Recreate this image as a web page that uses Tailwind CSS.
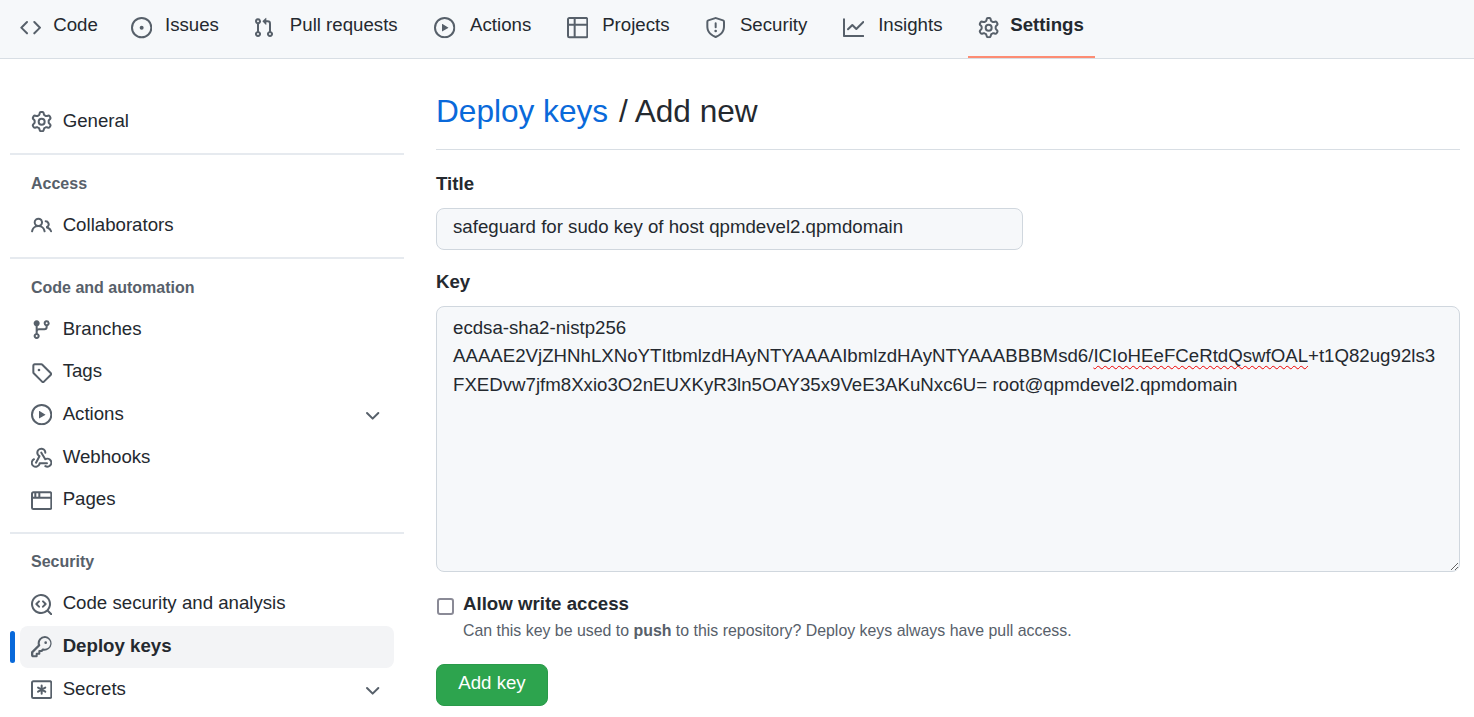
<!DOCTYPE html>
<html lang="en">
<head>
    <meta charset="UTF-8">
    <title>Add deploy key</title>
    <script src="https://cdn.jsdelivr.net/npm/@tailwindcss/browser@4"></script>
</head>
<body class="h-screen overflow-hidden bg-white font-['Liberation_Sans',Arial,sans-serif] text-[18.67px] text-[#24292f]">
    <svg class="hidden">
        <symbol id="play" viewBox="0 0 16 16"><path d="M1.5 8a6.5 6.5 0 1113 0 6.5 6.5 0 01-13 0zM8 0a8 8 0 100 16A8 8 0 008 0zM6.379 5.227A.25.25 0 006 5.442v5.117a.25.25 0 00.379.214l4.264-2.559a.25.25 0 000-.428L6.379 5.227z"/></symbol>
        <symbol id="gear" viewBox="0 0 16 16"><path d="M8 0a8.2 8.2 0 0 1 .701.031C9.444.095 9.99.645 10.16 1.29l.288 1.107c.018.066.079.158.212.224.231.114.454.243.668.386.123.082.233.09.299.071l1.103-.303c.644-.176 1.392.021 1.82.63.27.385.506.792.704 1.218.315.675.111 1.422-.364 1.891l-.814.806c-.049.048-.098.147-.088.294.016.257.016.515 0 .772-.01.147.038.246.088.294l.814.806c.475.469.679 1.216.364 1.891a7.977 7.977 0 0 1-.704 1.217c-.428.61-1.176.807-1.82.63l-1.102-.302c-.067-.019-.177-.011-.3.071a5.909 5.909 0 0 1-.668.386c-.133.066-.194.158-.211.224l-.29 1.106c-.168.646-.715 1.196-1.458 1.26a8.006 8.006 0 0 1-1.402 0c-.743-.064-1.289-.614-1.458-1.26l-.289-1.106c-.018-.066-.079-.158-.212-.224a5.738 5.738 0 0 1-.668-.386c-.123-.082-.233-.09-.299-.071l-1.103.303c-.644.176-1.392-.021-1.82-.63a8.12 8.12 0 0 1-.704-1.218c-.315-.675-.111-1.422.363-1.891l.815-.806c.05-.048.098-.147.088-.294a6.214 6.214 0 0 1 0-.772c.01-.147-.038-.246-.088-.294l-.815-.806C.635 6.045.431 5.298.746 4.623a7.92 7.92 0 0 1 .704-1.217c.428-.61 1.176-.807 1.82-.63l1.102.302c.067.019.177.011.3-.071.214-.143.437-.272.668-.386.133-.066.194-.158.211-.224l.29-1.106C6.009.645 6.556.095 7.299.03 7.53.01 7.764 0 8 0Zm-.571 1.525c-.036.003-.108.036-.137.146l-.289 1.105c-.147.561-.549.967-.998 1.189-.173.086-.34.183-.5.29-.417.278-.97.423-1.529.27l-1.103-.303c-.109-.03-.175.016-.195.045-.22.312-.412.644-.573.99-.014.031-.021.11.059.19l.815.806c.411.406.562.957.53 1.456a4.709 4.709 0 0 0 0 .582c.032.499-.119 1.05-.53 1.456l-.815.806c-.081.08-.073.159-.059.19.162.346.353.677.573.989.02.03.085.076.195.046l1.102-.303c.56-.153 1.113-.008 1.53.27.161.107.328.204.501.29.447.222.85.629.997 1.189l.289 1.105c.029.109.101.143.137.146a6.6 6.6 0 0 0 1.142 0c.036-.003.108-.036.137-.146l.289-1.105c.147-.561.549-.967.998-1.189.173-.086.34-.183.5-.29.417-.278.97-.423 1.529-.27l1.103.303c.109.029.175-.016.195-.045.22-.313.411-.644.573-.99.014-.031.021-.11-.059-.19l-.815-.806c-.411-.406-.562-.957-.53-1.456a4.709 4.709 0 0 0 0-.582c-.032-.499.119-1.05.53-1.456l.815-.806c.081-.08.073-.159.059-.19a6.464 6.464 0 0 0-.573-.989c-.02-.03-.085-.076-.195-.046l-1.102.303c-.56.153-1.113.008-1.53-.27a4.44 4.44 0 0 0-.501-.29c-.447-.222-.85-.629-.997-1.189l-.289-1.105c-.029-.11-.101-.143-.137-.146a6.6 6.6 0 0 0-1.142 0ZM11 8a3 3 0 1 1-6 0 3 3 0 0 1 6 0ZM9.5 8a1.5 1.5 0 1 0-3.001.001A1.5 1.5 0 0 0 9.5 8Z"/></symbol>
        <symbol id="chevron" viewBox="0 0 16 16"><path d="M12.78 6.22a.75.75 0 010 1.06l-4.25 4.25a.75.75 0 01-1.06 0L3.22 7.28a.75.75 0 011.06-1.06L8 9.94l3.72-3.72a.75.75 0 011.06 0z"/></symbol>
    </svg>

    <!-- repo tabs; the hidden bold copy reserves the width of the selected state -->
    <nav class="flex h-[59px] gap-[10.85px] border-b border-[#d8dee4] bg-[#f6f8fa] pl-[9.5px]">
        <a class="flex items-center gap-[10.67px] px-[10.67px] pb-[8px]">
            <svg class="mt-[6px] size-[21.33px] fill-[#57606a]" viewBox="0 0 16 16"><path d="M4.72 3.22a.75.75 0 011.06 1.06L2.06 8l3.72 3.72a.75.75 0 11-1.06 1.06L.47 8.53a.75.75 0 010-1.06l4.25-4.25zm6.56 0a.75.75 0 10-1.06 1.06L13.94 8l-3.72 3.72a.75.75 0 101.06 1.06l4.25-4.25a.75.75 0 000-1.06l-4.25-4.25z"/></svg>
            <span data-content="Code" class="text-center after:invisible after:block after:h-0 after:overflow-hidden after:font-bold after:content-[attr(data-content)]">Code</span>
        </a>
        <a class="flex items-center gap-[10.67px] px-[10.67px] pb-[8px]">
            <svg class="mt-[6px] size-[21.33px] fill-[#57606a]" viewBox="0 0 16 16"><path d="M8 9.5a1.5 1.5 0 100-3 1.5 1.5 0 000 3z"/><path d="M8 0a8 8 0 110 16A8 8 0 018 0zM1.5 8a6.5 6.5 0 1013 0 6.5 6.5 0 00-13 0z"/></svg>
            <span data-content="Issues" class="text-center after:invisible after:block after:h-0 after:overflow-hidden after:font-bold after:content-[attr(data-content)]">Issues</span>
        </a>
        <a class="flex items-center gap-[10.67px] px-[10.67px] pb-[8px]">
            <svg class="mt-[6px] size-[21.33px] fill-[#57606a]" viewBox="0 0 16 16"><path d="M7.177 3.073L9.573.677A.25.25 0 0110 .854v4.792a.25.25 0 01-.427.177L7.177 3.427a.25.25 0 010-.354zM3.75 2.5a.75.75 0 100 1.5.75.75 0 000-1.5zm-2.25.75a2.25 2.25 0 113 2.122v5.256a2.251 2.251 0 11-1.5 0V5.372A2.25 2.25 0 011.5 3.25zM11 2.5h-1V4h1a1 1 0 011 1v5.628a2.251 2.251 0 101.5 0V5A2.5 2.5 0 0011 2.5zm1 10.25a.75.75 0 111.5 0 .75.75 0 01-1.5 0zM3.75 12a.75.75 0 100 1.5.75.75 0 000-1.5z"/></svg>
            <span data-content="Pull requests" class="text-center after:invisible after:block after:h-0 after:overflow-hidden after:font-bold after:content-[attr(data-content)]">Pull requests</span>
        </a>
        <a class="flex items-center gap-[10.67px] px-[10.67px] pb-[8px]">
            <svg class="mt-[6px] size-[21.33px] fill-[#57606a]"><use href="#play"/></svg>
            <span data-content="Actions" class="text-center after:invisible after:block after:h-0 after:overflow-hidden after:font-bold after:content-[attr(data-content)]">Actions</span>
        </a>
        <a class="flex items-center gap-[10.67px] px-[10.67px] pb-[8px]">
            <svg class="mt-[6px] size-[21.33px] fill-[#57606a]" viewBox="0 0 16 16"><path fill-rule="evenodd" d="M0 1.75C0 .784.784 0 1.75 0h12.5C15.216 0 16 .784 16 1.75v12.5A1.75 1.75 0 0114.25 16H1.75A1.75 1.75 0 010 14.25V1.75zM1.5 6.5v7.75c0 .138.112.25.25.25H5v-8H1.5zM5 5H1.5V1.75a.25.25 0 01.25-.25H5V5zm1.5 1.5v8h7.75a.25.25 0 00.25-.25V6.5h-8zm8-1.5h-8V1.5h7.75a.25.25 0 01.25.25V5z"/></svg>
            <span data-content="Projects" class="text-center after:invisible after:block after:h-0 after:overflow-hidden after:font-bold after:content-[attr(data-content)]">Projects</span>
        </a>
        <a class="flex items-center gap-[10.67px] px-[10.67px] pb-[8px]">
            <svg class="mt-[6px] size-[21.33px] fill-[#57606a]" viewBox="0 0 16 16"><path d="M7.467.133a1.75 1.75 0 011.066 0l5.25 1.68A1.75 1.75 0 0115 3.48V7c0 1.566-.32 3.182-1.303 4.682-.983 1.498-2.585 2.813-5.032 3.855a1.7 1.7 0 01-1.33 0c-2.447-1.042-4.049-2.357-5.032-3.855C1.32 10.182 1 8.566 1 7V3.48a1.75 1.75 0 011.217-1.667l5.25-1.68zm.61 1.429a.25.25 0 00-.153 0l-5.25 1.68a.25.25 0 00-.174.238V7c0 1.358.275 2.666 1.057 3.86.784 1.194 2.121 2.34 4.366 3.297a.2.2 0 00.154 0c2.245-.956 3.582-2.104 4.366-3.298C13.225 9.666 13.5 8.36 13.5 7V3.48a.25.25 0 00-.174-.237l-5.25-1.68zM9 10.5a1 1 0 11-2 0 1 1 0 012 0zm-.25-5.75a.75.75 0 10-1.5 0v3a.75.75 0 001.5 0v-3z"/></svg>
            <span data-content="Security" class="text-center after:invisible after:block after:h-0 after:overflow-hidden after:font-bold after:content-[attr(data-content)]">Security</span>
        </a>
        <a class="flex items-center gap-[10.67px] px-[10.67px] pb-[8px]">
            <svg class="mt-[6px] size-[21.33px] fill-[#57606a]" viewBox="0 0 16 16"><path d="M1.5 1.75a.75.75 0 00-1.5 0v12.5c0 .414.336.75.75.75h14.5a.75.75 0 000-1.5H1.5V1.75zm14.28 2.53a.75.75 0 00-1.06-1.06L10 7.94 7.53 5.47a.75.75 0 00-1.06 0L3.22 8.72a.75.75 0 001.06 1.06L7 7.06l2.47 2.47a.75.75 0 001.06 0l5.25-5.25z"/></svg>
            <span data-content="Insights" class="text-center after:invisible after:block after:h-0 after:overflow-hidden after:font-bold after:content-[attr(data-content)]">Insights</span>
        </a>
        <a class="flex items-center gap-[10.67px] border-b-2 border-[#fd8c73] px-[10.67px] pb-[6px] font-bold">
            <svg class="mt-[6px] size-[21.33px] fill-[#57606a]"><use href="#gear"/></svg>
            Settings
        </a>
    </nav>

    <div class="flex gap-[32px] pl-[10px] pr-[14px]">
        <!-- settings menu -->
        <aside class="w-[394px] shrink-0 pt-[41.4px]">
            <a class="mx-[10px] flex h-[42.67px] items-center gap-[10.67px] pb-[2px] pl-[10.67px]">
                <svg class="mt-[2px] size-[21.33px] fill-[#57606a]"><use href="#gear"/></svg>
                General
            </a>
            <div class="mt-[10px] h-[2px] bg-[#e6eaef]"></div>
            <h3 class="px-[21px] pb-[10.67px] pt-[18.67px] text-[16px] leading-[20px] font-bold text-[#57606a]">Access</h3>
            <a class="mx-[10px] flex h-[42.67px] items-center gap-[10.67px] pb-[2px] pl-[10.67px]">
                <svg class="mt-[2px] size-[21.33px] fill-[#57606a]" viewBox="0 0 16 16"><path d="M2 5.5a3.5 3.5 0 115.898 2.549 5.507 5.507 0 013.034 4.084.75.75 0 11-1.482.235 4.001 4.001 0 00-7.9 0 .75.75 0 01-1.482-.236A5.507 5.507 0 013.102 8.05 3.49 3.49 0 012 5.5zM11 4a.75.75 0 100 1.5 1.5 1.5 0 01.666 2.844.75.75 0 00-.416.672v.352a.75.75 0 00.574.73c1.2.289 2.162 1.2 2.522 2.372a.75.75 0 101.434-.44 5.01 5.01 0 00-2.56-3.012A3 3 0 0011 4zM5.5 3.5a2 2 0 100 4 2 2 0 000-4z"/></svg>
                Collaborators
            </a>
            <div class="mt-[10px] h-[2px] bg-[#e6eaef]"></div>
            <h3 class="px-[21px] pb-[10.67px] pt-[18.67px] text-[16px] leading-[20px] font-bold text-[#57606a]">Code and automation</h3>
            <a class="mx-[10px] flex h-[42.67px] items-center gap-[10.67px] pb-[2px] pl-[10.67px]">
                <svg class="mt-[2px] size-[21.33px] fill-[#57606a]" viewBox="0 0 16 16"><path d="M11.75 2.5a.75.75 0 100 1.5.75.75 0 000-1.5zm-2.25.75a2.25 2.25 0 113 2.122V6A2.5 2.5 0 0110 8.5H6a1 1 0 00-1 1v1.128a2.251 2.251 0 11-1.5 0V5.372a2.25 2.25 0 111.5 0v1.836A2.492 2.492 0 016 7h4a1 1 0 001-1v-.628A2.25 2.25 0 019.5 3.25zM4.25 12a.75.75 0 100 1.5.75.75 0 000-1.5zM3.5 3.25a.75.75 0 111.5 0 .75.75 0 01-1.5 0z"/></svg>
                Branches
            </a>
            <a class="mx-[10px] flex h-[42.67px] items-center gap-[10.67px] pb-[2px] pl-[10.67px]">
                <svg class="mt-[2px] size-[21.33px] fill-[#57606a]" viewBox="0 0 16 16"><path fill-rule="evenodd" d="M2.5 7.775V2.75a.25.25 0 01.25-.25h5.025a.25.25 0 01.177.073l6.25 6.25a.25.25 0 010 .354l-5.025 5.025a.25.25 0 01-.354 0l-6.25-6.25a.25.25 0 01-.073-.177zm-1.5 0V2.75C1 1.784 1.784 1 2.75 1h5.025c.464 0 .91.184 1.238.513l6.25 6.25a1.75 1.75 0 010 2.474l-5.026 5.026a1.75 1.75 0 01-2.474 0l-6.25-6.25A1.75 1.75 0 011 7.775zM6 5a1 1 0 100 2 1 1 0 000-2z"/></svg>
                Tags
            </a>
            <a class="mx-[10px] flex h-[42.67px] items-center gap-[10.67px] pb-[2px] pl-[10.67px]">
                <svg class="mt-[2px] size-[21.33px] fill-[#57606a]"><use href="#play"/></svg>
                Actions
                <svg class="ml-auto mr-[11px] mt-[2px] size-[21.33px] fill-[#57606a]"><use href="#chevron"/></svg>
            </a>
            <a class="mx-[10px] flex h-[42.67px] items-center gap-[10.67px] pb-[2px] pl-[10.67px]">
                <svg class="mt-[2px] size-[21.33px] fill-[#57606a]" viewBox="0 0 16 16"><path d="M5.5 4.25a2.25 2.25 0 014.5 0 .75.75 0 001.5 0 3.75 3.75 0 10-6.14 2.889l-2.272 4.258a.75.75 0 001.324.706L7 7.25a.75.75 0 00-.309-1.015A2.25 2.25 0 015.5 4.25z"/><path d="M7.364 3.607a.75.75 0 011.03.257l2.608 4.349a3.75 3.75 0 11-.628 6.785.75.75 0 01.752-1.299 2.25 2.25 0 10-.033-3.88.75.75 0 01-1.03-.256L7.107 4.636a.75.75 0 01.257-1.03z"/><path d="M2.9 8.776A.75.75 0 012.625 9.8 2.25 2.25 0 105.75 12.25a.75.75 0 01.75-.75h5.5a.75.75 0 010 1.5H7.182a3.75 3.75 0 11-5.307-4.5.75.75 0 011.025.276z"/></svg>
                Webhooks
            </a>
            <a class="mx-[10px] flex h-[42.67px] items-center gap-[10.67px] pb-[2px] pl-[10.67px]">
                <svg class="mt-[2px] size-[21.33px] fill-[#57606a]" viewBox="0 0 16 16"><path fill-rule="evenodd" d="M0 2.75C0 1.784.784 1 1.75 1h12.5c.966 0 1.75.784 1.75 1.75v10.5A1.75 1.75 0 0114.25 15H1.75A1.75 1.75 0 010 13.25V2.75zM1.5 6.5v6.75c0 .138.112.25.25.25h12.5a.25.25 0 00.25-.25V6.5h-13zM7 5h7.5V2.75a.25.25 0 00-.25-.25H7V5zM5.5 2.5H4V5h1.5V2.5zM2.5 2.5h-.75a.25.25 0 00-.25.25V5h1V2.5z"/></svg>
                Pages
            </a>
            <div class="mt-[10px] h-[2px] bg-[#e6eaef]"></div>
            <h3 class="px-[21px] pb-[10.67px] pt-[18.67px] text-[16px] leading-[20px] font-bold text-[#57606a]">Security</h3>
            <a class="mx-[10px] flex h-[42.67px] items-center gap-[10.67px] pb-[2px] pl-[10.67px]">
                <svg class="mt-[2px] size-[21.33px] fill-[#57606a]" viewBox="0 0 16 16"><path d="M8.47 4.97a.75.75 0 000 1.06L9.94 7.5 8.47 8.97a.75.75 0 101.06 1.06l2-2a.75.75 0 000-1.06l-2-2a.75.75 0 00-1.06 0zM6.53 6.03a.75.75 0 00-1.06-1.06l-2 2a.75.75 0 000 1.06l2 2a.75.75 0 101.06-1.06L5.06 7.5l1.47-1.47z"/><path fill-rule="evenodd" d="M12.246 13.307a7.5 7.5 0 111.06-1.06l2.474 2.473a.75.75 0 11-1.06 1.06l-2.474-2.473zM1.5 7.5a6 6 0 1110.386 4.094.75.75 0 00-.292.293A6 6 0 011.5 7.5z"/></svg>
                Code security and analysis
            </a>
            <div class="relative">
                <span class="absolute left-0 top-[5px] h-[32px] w-[5px] rounded-full bg-[#0969da]"></span>
                <a class="mx-[10px] flex h-[42.67px] items-center gap-[10.67px] rounded-lg bg-[#f3f4f6] pb-[2px] pl-[10.67px] font-bold">
                    <svg class="mt-[2px] size-[21.33px] fill-[#57606a]" viewBox="0 0 16 16"><path fill-rule="evenodd" d="M6.5 5.5a4 4 0 112.731 3.795.75.75 0 00-.768.18L7.44 10.5H6.25a.75.75 0 00-.75.75v1.25H4.25a.75.75 0 00-.75.75v1.25h-1.5a.25.25 0 01-.25-.25v-1.69l5.024-5.024a.75.75 0 00.181-.768A3.995 3.995 0 016.5 5.5zm4-5.5a5.5 5.5 0 00-5.348 6.789L.22 11.72a.75.75 0 00-.22.53v2c0 .966.784 1.75 1.75 1.75h2.5a.75.75 0 00.75-.75V14h1.25a.75.75 0 00.75-.75V12h1a.75.75 0 00.53-.22l.772-.773A5.5 5.5 0 1010.5 0zM12 5a1 1 0 11-2 0 1 1 0 012 0z"/></svg>
                    Deploy keys
                </a>
            </div>
            <a class="mx-[10px] flex h-[42.67px] items-center gap-[10.67px] pb-[2px] pl-[10.67px]">
                <svg class="mt-[2px] size-[21.33px] fill-[#57606a]" viewBox="0 0 16 16"><path fill-rule="evenodd" d="M0 2.75C0 1.784.784 1 1.75 1h12.5c.966 0 1.75.784 1.75 1.75v10.5A1.75 1.75 0 0114.25 15H1.75A1.75 1.75 0 010 13.25V2.75zm1.75-.25a.25.25 0 00-.25.25v10.5c0 .138.112.25.25.25h12.5a.25.25 0 00.25-.25V2.75a.25.25 0 00-.25-.25H1.75z"/><path d="M8 4.9v6.2M5.3 6.45l5.4 3.1M10.7 6.45l-5.4 3.1" stroke="#57606a" stroke-width="1.5" stroke-linecap="round"/></svg>
                Secrets
                <svg class="ml-auto mr-[11px] mt-[2px] size-[21.33px] fill-[#57606a]"><use href="#chevron"/></svg>
            </a>
        </aside>

        <!-- add deploy key form -->
        <main class="min-w-0 flex-1 pt-[32px]">
            <h1 class="border-b border-[#d8dee4] pb-[17px] text-[31.6px] leading-[41px]"><a class="text-[#0969da]">Deploy keys</a> <span class="ml-[2px]">/ Add new</span></h1>
            <label class="mt-[21px] block font-bold leading-[26px]">Title</label>
            <input type="text" value="safeguard for sudo key of host qpmdevel2.qpmdomain" class="mt-[11px] block h-[42px] w-[587px] rounded-lg border border-[#d0d7de] bg-[#f6f8fa] px-[16px] pb-[5px] text-[18.67px] outline-none">
            <label class="mt-[19px] block font-bold leading-[26px]">Key</label>
            <div class="mt-[11px] h-[266px] resize overflow-hidden break-words rounded-lg border border-[#d0d7de] bg-[#f6f8fa] px-[16px] py-[7px] leading-[28.4px]">ecdsa-sha2-nistp256 AAAAE2VjZHNhLXNoYTItbmlzdHAyNTYAAAAIbmlzdHAyNTYAAABBBMsd6/<span class="underline decoration-[#f00000] decoration-wavy decoration-[1.2px] underline-offset-[3px] [text-decoration-skip-ink:none]">ICIoHEeFCeRtdQswfOAL</span>+t1Q82ug92ls3FXEDvw7jfm8Xxio3O2nEUXKyR3ln5OAY35x9VeE3AKuNxc6U= root@qpmdevel2.qpmdomain</div>
            <div class="mt-[19px] flex gap-[9px]">
                <input type="checkbox" class="ml-[1px] mt-[7px] size-[17px] appearance-none rounded-[3px] border-2 border-[#8a8a96] bg-white">
                <div>
                    <div class="font-bold leading-[26px]">Allow write access</div>
                    <p class="mt-[1px] text-[15.9px] leading-[26px] text-[#57606a]">Can this key be used to <b>push</b> to this repository? Deploy keys always have pull access.</p>
                </div>
            </div>
            <button class="mt-[20px] h-[42px] w-[112px] rounded-lg border border-[#2a9a4a] bg-[#2da44e] pb-[4px] text-[18.67px] text-white">Add key</button>
        </main>
    </div>
</body>
</html>
